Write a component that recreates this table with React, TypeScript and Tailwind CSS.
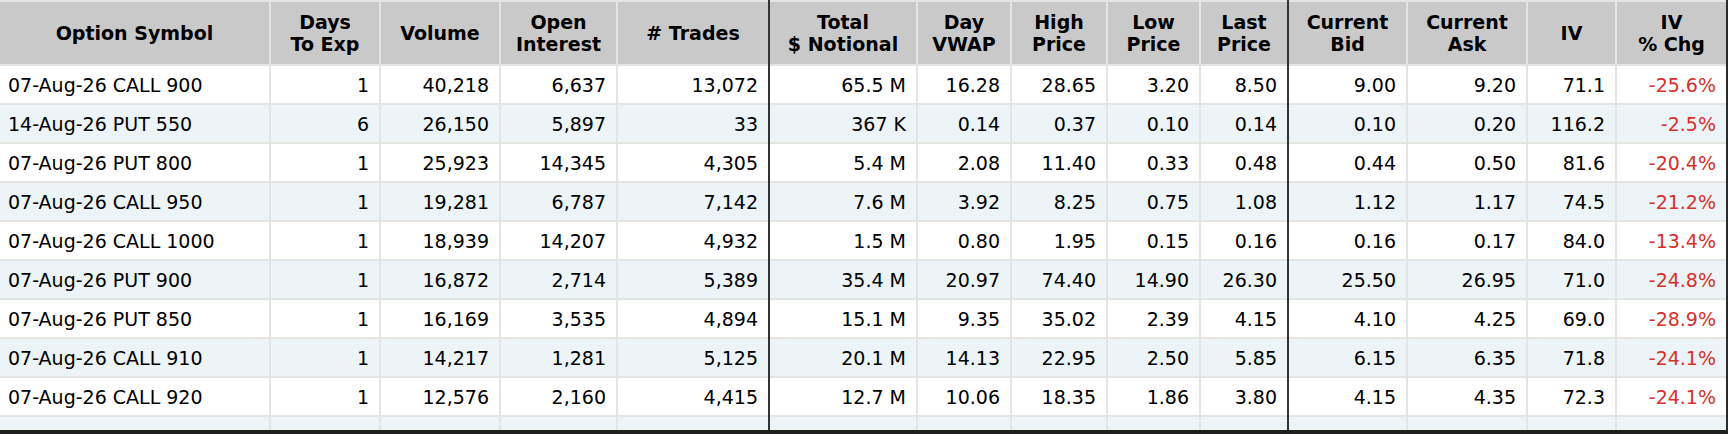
import React from 'react';

type OptionRow = {
  symbol: string;
  days: string;
  volume: string;
  openInterest: string;
  trades: string;
  notional: string;
  vwap: string;
  high: string;
  low: string;
  last: string;
  bid: string;
  ask: string;
  iv: string;
  ivChg: string;
};

const columns: Array<{ key: keyof OptionRow; label: string[]; width: string; divider?: boolean }> = [
  { key: 'symbol', label: ['Option Symbol'], width: 'w-[269px]' },
  { key: 'days', label: ['Days', 'To Exp'], width: 'w-[108px]' },
  { key: 'volume', label: ['Volume'], width: 'w-[118px]' },
  { key: 'openInterest', label: ['Open', 'Interest'], width: 'w-[115px]' },
  { key: 'trades', label: ['# Trades'], width: 'w-[150px]' },
  { key: 'notional', label: ['Total', '$ Notional'], width: 'w-[146px]', divider: true },
  { key: 'vwap', label: ['Day', 'VWAP'], width: 'w-[92px]' },
  { key: 'high', label: ['High', 'Price'], width: 'w-[94px]' },
  { key: 'low', label: ['Low', 'Price'], width: 'w-[91px]' },
  { key: 'last', label: ['Last', 'Price'], width: 'w-[86px]' },
  { key: 'bid', label: ['Current', 'Bid'], width: 'w-[117px]', divider: true },
  { key: 'ask', label: ['Current', 'Ask'], width: 'w-[118px]' },
  { key: 'iv', label: ['IV'], width: 'w-[87px]' },
  { key: 'ivChg', label: ['IV', '% Chg'], width: 'w-[109px]' },
];

const rows: OptionRow[] = [
  { symbol: '07-Aug-26 CALL 900', days: '1', volume: '40,218', openInterest: '6,637', trades: '13,072', notional: '65.5 M', vwap: '16.28', high: '28.65', low: '3.20', last: '8.50', bid: '9.00', ask: '9.20', iv: '71.1', ivChg: '-25.6%' },
  { symbol: '14-Aug-26 PUT 550', days: '6', volume: '26,150', openInterest: '5,897', trades: '33', notional: '367 K', vwap: '0.14', high: '0.37', low: '0.10', last: '0.14', bid: '0.10', ask: '0.20', iv: '116.2', ivChg: '-2.5%' },
  { symbol: '07-Aug-26 PUT 800', days: '1', volume: '25,923', openInterest: '14,345', trades: '4,305', notional: '5.4 M', vwap: '2.08', high: '11.40', low: '0.33', last: '0.48', bid: '0.44', ask: '0.50', iv: '81.6', ivChg: '-20.4%' },
  { symbol: '07-Aug-26 CALL 950', days: '1', volume: '19,281', openInterest: '6,787', trades: '7,142', notional: '7.6 M', vwap: '3.92', high: '8.25', low: '0.75', last: '1.08', bid: '1.12', ask: '1.17', iv: '74.5', ivChg: '-21.2%' },
  { symbol: '07-Aug-26 CALL 1000', days: '1', volume: '18,939', openInterest: '14,207', trades: '4,932', notional: '1.5 M', vwap: '0.80', high: '1.95', low: '0.15', last: '0.16', bid: '0.16', ask: '0.17', iv: '84.0', ivChg: '-13.4%' },
  { symbol: '07-Aug-26 PUT 900', days: '1', volume: '16,872', openInterest: '2,714', trades: '5,389', notional: '35.4 M', vwap: '20.97', high: '74.40', low: '14.90', last: '26.30', bid: '25.50', ask: '26.95', iv: '71.0', ivChg: '-24.8%' },
  { symbol: '07-Aug-26 PUT 850', days: '1', volume: '16,169', openInterest: '3,535', trades: '4,894', notional: '15.1 M', vwap: '9.35', high: '35.02', low: '2.39', last: '4.15', bid: '4.10', ask: '4.25', iv: '69.0', ivChg: '-28.9%' },
  { symbol: '07-Aug-26 CALL 910', days: '1', volume: '14,217', openInterest: '1,281', trades: '5,125', notional: '20.1 M', vwap: '14.13', high: '22.95', low: '2.50', last: '5.85', bid: '6.15', ask: '6.35', iv: '71.8', ivChg: '-24.1%' },
  { symbol: '07-Aug-26 CALL 920', days: '1', volume: '12,576', openInterest: '2,160', trades: '4,415', notional: '12.7 M', vwap: '10.06', high: '18.35', low: '1.86', last: '3.80', bid: '4.15', ask: '4.35', iv: '72.3', ivChg: '-24.1%' },
];

// dark rule drawn into the spacing gap left of the cell
const dividerCls =
  'relative before:absolute before:left-[-2px] before:top-[-2px] before:bottom-[-2px] before:w-[2px] before:bg-[#333333]';

export default function App() {
  return (
    <div
      className="w-[1728px] h-[434px] overflow-hidden bg-[#e4e4e4] border-r-2 border-b-4 border-r-[#2b2b2b] border-b-[#1f1f1f]"
      style={{ fontFamily: '"DejaVu Sans", Verdana, sans-serif' }}
    >
      <table className="ml-[-2px] table-fixed border-separate border-spacing-[2px] w-[1730px] text-[19px] text-black">
        <colgroup>
          {columns.map((c) => (
            <col key={c.key} className={c.width} />
          ))}
        </colgroup>
        <thead>
          <tr>
            {columns.map((c) => (
              <th
                key={c.key}
                className={`h-[62px] bg-[#c9c9c9] px-1 text-center align-middle font-bold leading-[22px] ${
                  c.divider ? dividerCls : ''
                }`}
              >
                {c.label.map((line) => (
                  <div key={line} className="whitespace-nowrap">
                    {line}
                  </div>
                ))}
              </th>
            ))}
          </tr>
        </thead>
        <tbody>
          {rows.map((row, idx) => (
            <tr key={row.symbol} className={idx % 2 === 1 ? 'bg-[#ecf4f7]' : 'bg-white'}>
              {columns.map((c) => (
                <td
                  key={c.key}
                  className={`h-[37px] whitespace-nowrap align-middle leading-[22px] ${
                    c.key === 'symbol' ? 'pl-[8px] text-left' : 'pr-[10px] text-right'
                  } ${c.key === 'ivChg' ? 'text-[#d9302a]' : ''} ${c.divider ? dividerCls : ''}`}
                >
                  {row[c.key]}
                </td>
              ))}
            </tr>
          ))}
          {/* next row, scrolled below the fold */}
          <tr className="bg-[#ecf4f7]">
            {columns.map((c) => (
              <td key={c.key} className={`h-[37px] ${c.divider ? dividerCls : ''}`} />
            ))}
          </tr>
        </tbody>
      </table>
    </div>
  );
}
